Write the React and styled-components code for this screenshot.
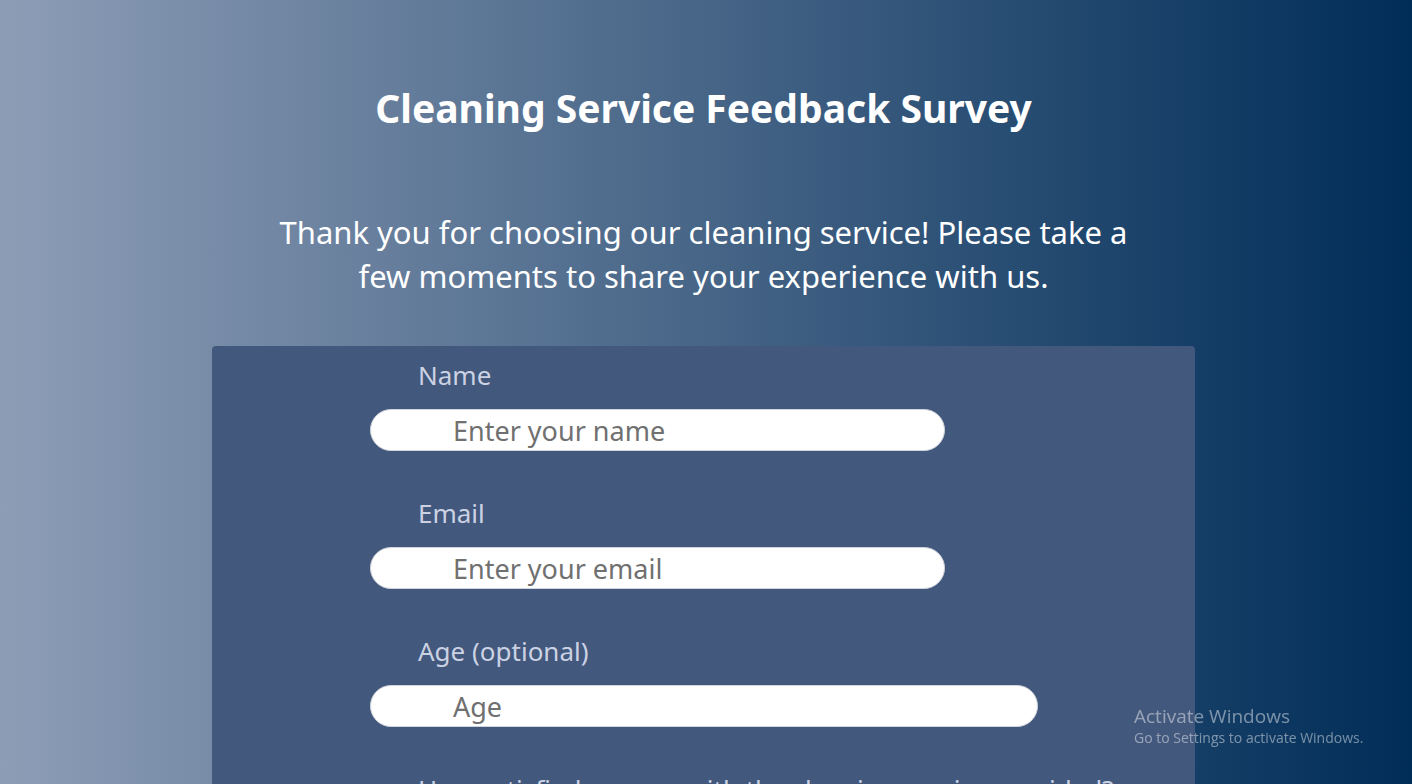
import React, { useState } from 'react';
import styled, { createGlobalStyle } from 'styled-components';

const GlobalStyle = createGlobalStyle`
  html, body {
    margin: 0;
    padding: 0;
  }
  body {
    font-family: 'Comic Sans MS', 'Noto Sans', sans-serif;
    background: linear-gradient(to right, #8d9db6, #002d58);
    min-height: 100vh;
    overflow: hidden;
  }
`;

const Page = styled.div`
  min-height: 100vh;
  display: flex;
  flex-direction: column;
  align-items: center;
  padding: 80px 5px 0 0;
`;

const Title = styled.h1`
  margin: 0;
  color: #fff;
  font-size: 39px;
  font-weight: bold;
  line-height: 56px;
  text-align: center;
`;

const Intro = styled.p`
  margin: 74px 0 0;
  width: 880px;
  color: #fff;
  font-size: 31px;
  line-height: 44px;
  text-align: center;
`;

const Card = styled.form`
  margin-top: 48px;
  width: 983px;
  background: #43587d;
  border-radius: 4px;
  padding: 9px 0 40px 158px;
  box-sizing: border-box;
`;

const Group = styled.div`
  display: flex;
  flex-direction: column;
  align-items: flex-start;
  margin-bottom: 42px;
`;

const Label = styled.label`
  margin-left: 48px;
  color: #cbd2e3;
  font-size: 26px;
  line-height: 40px;
  white-space: nowrap;
`;

const Field = styled.input`
  margin-top: 14px;
  width: ${(p) => p.$width}px;
  height: 42px;
  box-sizing: border-box;
  border: 1px solid #cfd3da;
  border-radius: 21px;
  background: #fff;
  padding: 0 0 0 82px;
  font-family: inherit;
  font-size: 27px;
  color: #333;
  outline: none;

  &::placeholder {
    color: #707070;
  }
`;

const Notice = styled.div`
  position: fixed;
  left: 1134px;
  top: 704px;
  font-family: 'Open Sans', 'Liberation Sans', sans-serif;
  color: rgba(255, 255, 255, 0.45);
  pointer-events: none;
`;

const NoticeTitle = styled.div`
  font-size: 19px;
  line-height: 24px;
`;

const NoticeText = styled.div`
  font-size: 14px;
  line-height: 20px;
`;

export default function App() {
  const [form, setForm] = useState({ name: '', email: '', age: '' });

  const handleChange = (e) => {
    const { name, value } = e.target;
    setForm({ ...form, [name]: value });
  };

  return (
    <>
      <GlobalStyle />
      <Page>
        <Title>Cleaning Service Feedback Survey</Title>
        <Intro>
          Thank you for choosing our cleaning service! Please take a few moments to share your experience with us.
        </Intro>
        <Card onSubmit={(e) => e.preventDefault()}>
          <Group>
            <Label htmlFor="name">Name</Label>
            <Field id="name" name="name" type="text" $width={575} placeholder="Enter your name" value={form.name} onChange={handleChange} />
          </Group>
          <Group>
            <Label htmlFor="email">Email</Label>
            <Field id="email" name="email" type="email" $width={575} placeholder="Enter your email" value={form.email} onChange={handleChange} />
          </Group>
          <Group>
            <Label htmlFor="age">Age (optional)</Label>
            <Field id="age" name="age" type="number" $width={668} placeholder="Age" value={form.age} onChange={handleChange} />
          </Group>
          <Group>
            <Label>How satisfied are you with the cleaning service provided?</Label>
          </Group>
        </Card>
      </Page>
      <Notice>
        <NoticeTitle>Activate Windows</NoticeTitle>
        <NoticeText>Go to Settings to activate Windows.</NoticeText>
      </Notice>
    </>
  );
}
